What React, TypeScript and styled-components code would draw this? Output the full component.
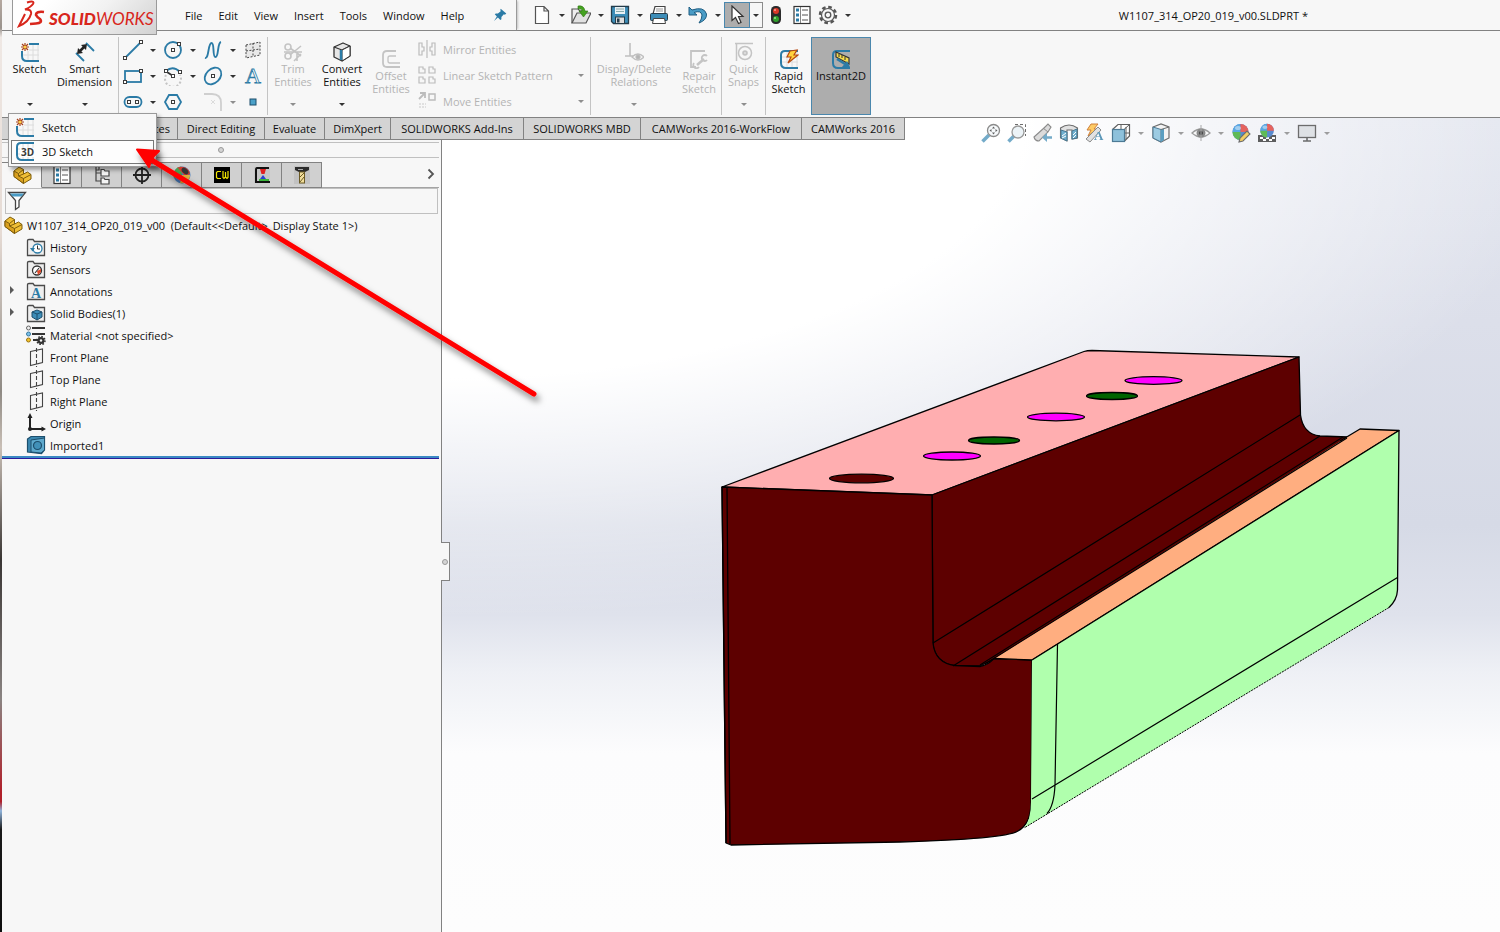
import React from 'react';
import styled, { createGlobalStyle, css } from 'styled-components';

const GlobalStyle = createGlobalStyle`
  *, *::before, *::after { box-sizing: border-box; }
  body { margin: 0; background: #f7f7f7; }
  body, button, input { font-family: 'Open Sans', 'Noto Sans', sans-serif; font-size: 11px; line-height: 13px; color: #101010; }
  button { border: 0; padding: 0; background: none; cursor: default; }
  svg { display: block; flex: none; }
  ul { list-style: none; margin: 0; padding: 0; }
`;

const LINE = '#828282';
const BLUE = '#2b7ba6';
const DARK = '#3c3c3c';
const DIM = '#c4c4c4';

/* ---------- icons ---------- */

const handle = (x: number, y: number, c = DARK) => (
  <rect x={x - 1.5} y={y - 1.5} width="3" height="3" fill="#fff" stroke={c} strokeWidth="1" />
);

const blueFrame = <path d="M19 2H6Q2 2 2 6V14Q2 19 7 19H19" fill="none" stroke={BLUE} strokeWidth="2" />;
const faintGrid = <path d="M8 3V18M13 3V18M18 3V18M3 8H19M3 13H19" stroke="#dcdcdc" fill="none" />;
const spark = (
  <g>
    <path d="M5 1V9M1 5H9M2 2L8 8M8 2L2 8" stroke="#a5401c" strokeWidth="1.2" />
    <circle cx="5" cy="5" r="1.6" fill="#ffd24a" />
  </g>
);
const folder = (
  <path d="M1.500 18.500V3.500Q1.500 2.500 3 2.500H7L8.500 4.500H18.500V18.500Z" fill="#eeeeee" stroke="#4a4a4a" strokeWidth="1.3" />
);
const plane = (
  <g fill="none" stroke="#444" strokeWidth="1.1">
    <path d="M4.500 4.500L16.500 2V15.500L4.500 18.500Z" />
    <path d="M10.500 1V20" strokeDasharray="4 2" />
  </g>
);
const partBlock = (
  <g stroke="#7e5d0c" strokeWidth="1" strokeLinejoin="round">
    <path d="M2 6V11.500L11.500 18.500L19 14V9.500L15.500 7L11.500 9V4.500L7 2Z" fill="#f0bf36" />
    <path d="M2 6L6.500 8.500V11L11.500 13.500V18.500L2 11.500Z" fill="#d9a01f" />
    <path d="M6.500 8.500L11.500 4.500M11.500 13.500L19 9.500M6.500 11L11.500 9" fill="none" />
  </g>
);
const ball = (
  <g>
    <circle cx="9.500" cy="9" r="8" fill="#3f78c8" />
    <path d="M9.500 9L9 1A8 8 0 0 0 1.500 9Z" fill="#3f9be0" />
    <path d="M9.500 9V1A8 8 0 0 1 17.500 9Z" fill="#e34a44" />
    <path d="M9.500 9H1.500A8 8 0 0 0 9.500 17Z" fill="#46b03c" />
    <ellipse cx="7" cy="5" rx="3" ry="2" fill="#fff" opacity=".45" />
  </g>
);

const ICONS: Record<string, React.ReactNode> = {
  sketch: <>{faintGrid}{blueFrame}<rect x="0" y="0" width="9" height="9" fill="#f7f7f7" />{spark}</>,
  sketch3d: (
    <>
      {faintGrid}{blueFrame}
      <rect x="5" y="7" width="14" height="9" fill="#fff" />
      <text x="6" y="15" fontSize="10" fontWeight="700" fill="#3c3c3c">3D</text>
    </>
  ),
  dimension: (
    <g fill="none">
      <path d="M1 11L9 19M11 1L19 9" stroke={BLUE} strokeWidth="1.800" />
      <path d="M5 9L9 5" stroke="#222" strokeWidth="2.500" />
      <path d="M2 12L3 6L8 11ZM12 2L6 3L11 8Z" fill="#222" />
    </g>
  ),
  line: <><path d="M2 18L18 2" stroke={BLUE} strokeWidth="1.800" />{handle(2, 18)}{handle(18, 2)}</>,
  circle: <><circle cx="10" cy="10" r="8" fill="none" stroke={BLUE} strokeWidth="1.800" />{handle(10, 10)}{handle(16, 4)}</>,
  spline: <path d="M2 18C6 19 5 3 8.500 3C12 3 9 17 12.500 17C16 17 14 3 18 2" fill="none" stroke={BLUE} strokeWidth="1.900" />,
  planeGrid: (
    <g fill="#e8e8e8" stroke="#444" strokeDasharray="2 1.500">
      <path d="M3 5L17 2V15L3 18Z" /><path d="M10 3V17M3 11L17 9" />
    </g>
  ),
  rect: <><rect x="2" y="5" width="16" height="11" fill="none" stroke={BLUE} strokeWidth="1.800" />{handle(18, 5)}{handle(2, 16)}</>,
  arc: (
    <>
      <path d="M3 5Q10 -1 17 6" fill="none" stroke={BLUE} strokeWidth="1.800" />
      <path d="M3 9A8 8 0 1 0 17 9" fill="none" stroke="#c4c4c4" strokeWidth="2" strokeDasharray="2 2" />
      <path d="M4 6L10 10" stroke="#333" strokeWidth="1.800" />{handle(3, 5)}{handle(17, 6)}{handle(10, 10)}
    </>
  ),
  ellipse: <><ellipse cx="10" cy="10" rx="9.500" ry="7" transform="rotate(-45 10 10)" fill="none" stroke={BLUE} strokeWidth="1.800" />{handle(10, 10)}</>,
  letter: <text x="2" y="17" fontFamily="Liberation Serif, serif" fontSize="22" fill="#fff" stroke={BLUE} strokeWidth="0.800">A</text>,
  slot: <><rect x="1.500" y="5" width="17" height="10" rx="5" fill="none" stroke={BLUE} strokeWidth="1.800" />{handle(6, 10)}{handle(14, 10)}</>,
  polygon: <><path d="M6 3H14L18 10L14 17H6L2 10Z" fill="none" stroke={BLUE} strokeWidth="1.800" />{handle(10, 10)}</>,
  fillet: <g fill="none" stroke="#cfcfcf"><path d="M1 2H9Q18 2 18 11V19" strokeWidth="1.800" /><path d="M8 8L12 12M12 8L8 12" strokeWidth="0.700" /></g>,
  point: <rect x="7" y="7" width="6" height="6" fill="#4aa0c8" stroke="#1d4f6d" />,
  trim: (
    <g fill="none" stroke={DIM} strokeWidth="1.600">
      <circle cx="5" cy="5" r="3" /><circle cx="5" cy="14" r="3" /><path d="M7 6L18 14M7 13L18 4M1 10H19" /><path d="M14 12V19M18 12L11 19" />
    </g>
  ),
  convert: (
    <g stroke="#333" strokeLinejoin="round">
      <path d="M2 5L11 1L18 4V14L10 19L2 15Z" fill="#e6e6e6" strokeWidth="1.300" />
      <path d="M2 5L10 8L18 4" fill="none" strokeWidth="1.200" /><path d="M10 8L18 4V14L10 19Z" fill="#fff" /><path d="M9 8V18" stroke={BLUE} strokeWidth="2.500" />
    </g>
  ),
  offset: <g fill="none" stroke={DIM} strokeWidth="1.800"><path d="M15 2H6Q2 2 2 6V14Q2 18 6 18H19" /><path d="M15 7H9Q7 7 7 9V12Q7 14 9 14H19" strokeWidth="1.300" /></g>,
  mirror: <g fill="none" stroke="#bcbcbc" strokeWidth="1.200"><path d="M10 1V19M2 4H5V8H7V12H5V16H2ZM18 4H15V8H13V12H15V16H18Z" /></g>,
  pattern: <g fill="none" stroke="#bcbcbc" strokeWidth="1.200"><path d="M2 2H6V4H8V8H2ZM12 2H16V4H18V8H12ZM2 12H6V14H8V18H2ZM12 12H16V14H18V18H12Z" /></g>,
  move: (
    <g fill="none" stroke="#bcbcbc" strokeWidth="1.800">
      <path d="M2 8L8 2M3 2H8V7" /><rect x="12" y="3" width="6" height="6" strokeWidth="1.500" /><path d="M2 13H9M2 16H9" stroke="#e0e0e0" strokeDasharray="2 1" />
    </g>
  ),
  relations: (
    <g fill="none" stroke="#c0c0c0">
      <path d="M6 1V14M1 14H11" strokeWidth="1.600" /><path d="M8 15Q14 9 20 15Q14 21 8 15Z" fill="#f7f7f7" strokeWidth="1.300" /><circle cx="14" cy="15" r="2.200" fill="#b5b5b5" />
    </g>
  ),
  repair: (
    <g fill="none" stroke={DIM}>
      <path d="M16 2H2V18H7" strokeWidth="1.800" /><path d="M8 16L15 10" strokeWidth="2.500" /><path d="M18 7A3 3 0 1 0 18 11M5 14A3 3 0 1 0 10 18" strokeWidth="1.800" />
    </g>
  ),
  snaps: <g fill="none" stroke={DIM} strokeWidth="1.500"><path d="M1 1.500H19M2.500 1V19" /><circle cx="11" cy="11" r="6.500" /><circle cx="11" cy="11" r="1.800" strokeWidth="2" /></g>,
  rapid: <>{faintGrid}{blueFrame}<path d="M11 2L18 1L15 6H19L9 14L12 8H8Z" fill="#ffd23c" stroke="#b5460f" strokeWidth="1.200" /></>,
  instant: (
    <>
      {blueFrame}
      <path d="M5 3L18 9V15L5 8Z" fill="#f5dc4c" stroke="#333" strokeWidth="1.200" /><path d="M8 5V8M11 6V9M14 8V11" stroke="#333" />
      <path d="M6 10L14 15" stroke={BLUE} strokeWidth="2.500" /><path d="M11 18L19 18L16 12Z" fill={BLUE} />
    </>
  ),
  file: <path d="M3.500 1.500H12L16.500 6V18.500H3.500ZM12 1.500V6H16.500" fill="#fff" stroke="#555" strokeWidth="1.200" />,
  open: (
    <>
      <path d="M1 18V4H7L9 6H13V9" fill="#eee" stroke="#555" strokeWidth="1.200" /><path d="M1 18L6 8H20L15 18Z" fill="#e2e2e2" stroke="#555" strokeWidth="1.200" />
      <path d="M7 1Q13 0 14 6H17L12.500 12L8 6H11Q11 3 7 4Z" fill="#45a321" stroke="#2d7412" strokeWidth=".6" />
    </>
  ),
  save: (
    <>
      <path d="M1.500 1.500H18.500V18.500H3.500L1.500 16.500Z" fill="#3c8db8" stroke="#253c4a" strokeWidth="1.300" /><rect x="5" y="2" width="10" height="7" fill="#e9f1f5" />
      <path d="M6 4H14M6 6.500H14" stroke="#8aa" /><rect x="5.500" y="12" width="9" height="6.500" fill="#ddd" stroke="#253c4a" /><rect x="7" y="13.500" width="2.500" height="4" fill="#253c4a" />
    </>
  ),
  print: (
    <>
      <path d="M4 9L6 1.500H16V9" fill="#fff" stroke="#444" strokeWidth="1.200" /><rect x="1.500" y="8.500" width="17" height="7" rx="1" fill="#3c8db8" stroke="#253c4a" />
      <path d="M4.500 13.500H15.500L16.500 18.500H3.500Z" fill="#fff" stroke="#444" /><path d="M7 4H14M7 6H14" stroke="#999" />
    </>
  ),
  undo: <path d="M1 2V10H9L6 7.500Q13 5 14 10Q14 14 11 18Q19 15 18.500 9Q16 1 4 5Z" fill="#4a9cc6" stroke="#1f5d81" strokeWidth="1" />,
  cursor: <path d="M5 1L5 15.500L8.500 12.500L11.500 18.500L14 17.500L11.500 11.500H16Z" fill="#fff" stroke="#333" strokeWidth="1.200" />,
  light: (
    <>
      <rect x="5" y="1" width="10" height="18" rx="4.500" fill="#2b2b2b" /><circle cx="10" cy="6" r="3" fill="#d93828" /><circle cx="10" cy="14" r="3" fill="#2fa02b" />
      <circle cx="9" cy="5" r="1" fill="#f7a398" /><circle cx="9" cy="13" r="1" fill="#a0e69a" />
    </>
  ),
  list: (
    <>
      <rect x="2" y="1.500" width="16" height="17" fill="#fff" stroke="#333" strokeWidth="1.200" /><path d="M8.500 2V18" stroke="#666" strokeWidth=".8" />
      <path d="M4 5H7M4 10H7M4 15H7" stroke={BLUE} strokeWidth="3" /><path d="M10 5H16M10 10H16M10 15H16" stroke="#555" />
    </>
  ),
  gear: (
    <g fill="none" stroke="#555">
      <circle cx="10" cy="10" r="8" strokeWidth="2.500" strokeDasharray="3.600 2.680" /><circle cx="10" cy="10" r="6.500" fill="#f7f7f7" strokeWidth="1.200" /><circle cx="10" cy="10" r="2.800" strokeWidth="1.300" />
    </g>
  ),
  pin: <path d="M11 1L19 8L17 9.500L15.500 9L12 13L12 16L10.500 17L7 13.500L1.500 18.500L5.500 12L2.500 9L4 8H7L11 4.500L10.500 2.500Z" fill={BLUE} />,
  tree: (
    <g fill="#f4f4f4" stroke="#444" strokeWidth="1.200">
      <path d="M4 1V16H9M4 8H9M1 1.500H7V5H4" fill="none" /><path d="M9 4.500H12L13 6H17V11H9ZM9 13H12L13 14.500H17V19H9Z" />
    </g>
  ),
  target: <g fill="none" stroke="#222" strokeWidth="1.800"><circle cx="10" cy="10" r="6.500" /><path d="M10 1V19M1 10H19" /></g>,
  ball: (
    <>
      <circle cx="10" cy="10" r="8.500" fill="#4a7fc0" /><path d="M10 10L2 13A8.500 8.500 0 0 1 9 1.500Z" fill="#4aa650" /><path d="M5 2L13 11L18 9A8.500 8.500 0 0 0 5 3Z" fill="#d13a2e" />
      <path d="M10 10L18 10A8 8 0 0 1 8 18Z" fill="#e3b23c" /><ellipse cx="13" cy="6" rx="4" ry="2.500" transform="rotate(45 13 6)" fill="#333" />
    </>
  ),
  camworks: (
    <>
      <rect x="2" y="2" width="16" height="16" fill="#000" /><path d="M9 6.500H5.500L4.500 7.500V12.500L5.500 13.500H9M11 6V12.500L12 13.500L13.500 12V7M13.500 12L15 13.500L16 12.500V6" fill="none" stroke="#f2e600" strokeWidth="1.200" />
    </>
  ),
  machine: (
    <>
      <rect x="2" y="2" width="16" height="16" fill="#c6c6c6" /><path d="M17 3H5Q4 3 4 5V17H18" fill="none" stroke="#111" strokeWidth="2" /><path d="M8 4H14L12.500 9H9.500Z" fill="#e02020" />
      <path d="M11 10L14 14H8Z" fill="#2a3fd0" /><rect x="7" y="14" width="10" height="2" fill="#3bb53b" />
    </>
  ),
  endmill: (
    <>
      <rect x="2" y="1" width="16" height="18" fill="#c2c2c2" /><path d="M3 2H17V5L13 7H7L3 5Z" fill="#2b2b2b" /><path d="M6 4.500H11" stroke="#aaa" /><rect x="7.500" y="7" width="5" height="11" fill="#f1dd9a" stroke="#6b5a25" /><path d="M8 12L12 8M8 17L12 12" stroke="#6b5a25" />
    </>
  ),
  funnel: <><path d="M1.500 1.500H18.500L12 9.500V16L8.500 18.500V9.500Z" fill="#fff" stroke="#444" strokeWidth="1.300" /><path d="M3 2.500H17L14.500 5.500H5.500Z" fill="#4a9cc6" /></>,
  part: partBlock,
  history: <>{folder}<circle cx="11.500" cy="11.500" r="4.500" fill="#fff" stroke={BLUE} strokeWidth="1.300" /><path d="M11.500 8.500V12H14" fill="none" stroke="#333" /><path d="M4 11H9L6.500 14.500Z" fill={BLUE} /></>,
  sensors: <>{folder}<circle cx="11" cy="11.500" r="4.500" fill="#fff" stroke="#333" strokeWidth="1.300" /><path d="M11 12L15 10V13L12 16Z" fill="#e04a2b" /><path d="M9 14L13 9" stroke="#333" strokeWidth="1.200" /></>,
  annotations: <>{folder}<text x="5" y="17" fontFamily="Liberation Serif, serif" fontSize="14" fontWeight="700" fill={BLUE}>A</text></>,
  bodies: <>{folder}<path d="M6 9L11 7L16 9V14L11 17L6 14Z" fill="#3c8db8" stroke="#1d4f6d" /><path d="M6 9L11 11V17M11 11L16 9" fill="none" stroke="#1d4f6d" /></>,
  material: (
    <>
      <path d="M6 3H19M6 9H19M7 15H12" stroke="#333" strokeWidth="1.800" /><circle cx="2.500" cy="3" r="2" fill="#eee" stroke="#666" /><circle cx="2.500" cy="9" r="2" fill="#7cc0ea" stroke="#3579a0" />
      <circle cx="2.500" cy="15" r="2" fill="#f4c22c" stroke="#9a7410" /><circle cx="15" cy="15.500" r="3.500" fill="#333" /><circle cx="15" cy="15.500" r="4" fill="none" stroke="#333" strokeWidth="1.500" strokeDasharray="1.600 1.500" /><circle cx="15" cy="15.500" r="1.200" fill="#f7f7f7" />
    </>
  ),
  plane,
  origin: <g fill="#222"><path d="M4 4V16H16" fill="none" stroke="#222" strokeWidth="2" /><path d="M4 0L6.500 5H1.500ZM20 16L15.500 18.500V13.500Z" /><circle cx="4" cy="16" r="2" /></g>,
  imported: (
    <>
      <path d="M1.500 4L5 1.500H18.500V15L15.500 18.500L1.500 17Z" fill="#3c88b0" stroke="#1d4f6d" strokeWidth="1.200" /><path d="M5 5L18.500 3V15L15 18L5 17Z" fill="#5ea9cd" stroke="#1d4f6d" /><circle cx="11.500" cy="10.500" r="4" fill="#4190b8" stroke="#1d4f6d" strokeWidth="1.200" />
    </>
  ),
  zoomFit: <><path d="M1.500 18.500L8 12" stroke="#5c9dc0" strokeWidth="3.500" /><circle cx="12.500" cy="7.500" r="6" fill="#f5f9fb" stroke="#777" strokeWidth="1.300" /><path d="M12.500 3.500L14 5.500H11ZM12.500 11.500L14 9.500H11ZM8.500 7.500L10.500 6V9ZM16.500 7.500L14.500 6V9Z" fill="#444" /></>,
  zoomArea: <><path d="M8 1.500H18.500V13" fill="none" stroke="#555" strokeDasharray="3 2" /><path d="M1.500 18.500L7 13" stroke="#5c9dc0" strokeWidth="3.500" /><circle cx="11" cy="9" r="6" fill="#e9f2f6" stroke="#888" strokeWidth="1.300" /></>,
  prevView: <><path d="M1 14L11 5L15 1L18 4L15 9L6 18Q2 18 1 14Z" fill="#d5d5d5" stroke="#777" strokeWidth="1.100" /><path d="M10 5L15 9" stroke="#777" /><path d="M19 14.500H13" stroke="#5c9dc0" strokeWidth="2.500" /><path d="M9 14.500L14 10V19Z" fill="#5c9dc0" /></>,
  section: <><path d="M1.500 5Q10 -1 18.500 5V15L13 16V7H8V18L1.500 15Z" fill="#ddd" stroke="#555" strokeWidth="1.100" /><path d="M2 7L8 9V18L2 15ZM13 8L18 6V15L13 16Z" fill="#58a3c8" stroke="#27607f" /><path d="M3 13L7 10M3 15L7 13M14 12L17 9M14 15L17 12" stroke="#fff" /></>,
  dynView: <><path d="M6 1H13L9 6H12L3 13L6 7H2Z" fill="#ffc34a" stroke="#c66a1a" /><path d="M1 16L13 4L16 7L5 19Z" fill="#ddd" stroke="#777" /><text x="9" y="17" fontFamily="Liberation Serif, serif" fontSize="13" fontWeight="700" fill="#3f86ad">A</text></>,
  cube: <><path d="M1.500 6.500L7 1.500H18.500V13L13 18.500" fill="#fff" stroke="#444" strokeWidth="1.200" /><path d="M13 6.500L18.500 1.500M10 2V6M13 10H18M15 4V16" stroke="#444" /><rect x="1.500" y="6.500" width="12" height="12" fill="#7cb8d6" stroke="#2f6484" strokeWidth="1.200" /></>,
  shaded: <><path d="M2 4L10 1L18 4V15L10 19L2 15Z" fill="#f3f3f3" stroke="#555" strokeWidth="1.200" /><path d="M2 4L10 6.500V19L2 15Z" fill="#8cc4de" stroke="#2f6484" /><path d="M10 6.500L13 5.500V17L10 19Z" fill="#3f8fb8" /><path d="M10 6.500L18 4" stroke="#555" /></>,
  eye: <><path d="M1 10Q10 2 19 10Q10 18 1 10Z" fill="#fafafa" stroke="#8c8c8c" strokeWidth="1.300" /><circle cx="10" cy="10" r="4.500" fill="#777" /><circle cx="10" cy="10" r="2" fill="#222" /><path d="M10 2V18" stroke="#999" /></>,
  appearance: <>{ball}<path d="M8 19L9 15L16 8L19 11L12 18Z" fill="#f3c84a" stroke="#555" strokeWidth="1.100" /></>,
  scene: <><rect x="1" y="12" width="18" height="7" fill="#444" /><path d="M3 14H6V16H3ZM9 14H12V16H9ZM15 14H18V16H15ZM6 16H9V18H6ZM12 16H15V18H12Z" fill="#fff" /><g transform="translate(2 0) scale(.85)">{ball}</g></>,
  monitor: <><rect x="1.500" y="2.500" width="17" height="12" fill="#dcdfe3" stroke="#555" strokeWidth="1.300" /><path d="M10 15V18M6 18H14" stroke="#555" strokeWidth="1.600" /></>,
};

const Icon = ({ name, size = 20 }: { name: string; size?: number }) => (
  <svg width={size} height={size} viewBox="0 0 20 20" aria-hidden="true">{ICONS[name]}</svg>
);

const Caret = styled.span<{ $dim?: boolean }>`
  display: block;
  border: 3px solid transparent;
  border-top-color: ${(p) => (p.$dim ? '#8e8e8e' : '#333')};
  border-bottom-width: 0;
`;

/* ---------- frame ---------- */

const Screen = styled.div`
  position: relative;
  display: flex;
  min-height: 100vh;
`;

const DesktopEdge = styled.div`
  flex: none;
  width: 2px;
  background: linear-gradient(#b5a8a0 0, #9a938d 3%, #efe8e4 4%, #e6dbd4 25%, #8f8a84 42%, #c9bfb6 48%, #3a3634 60%, #8a8482 75%, #b0202a 85%, #b0202a 86%, #8fb4dc 87%, #1a1a1a 89%, #0e0e0e 100%);
`;

const Window = styled.div`
  display: flex;
  flex: 1;
  flex-direction: column;
  min-width: 0;
`;

/* ---------- title bar ---------- */

const TitleBar = styled.header`
  display: flex;
  height: 31px;
  border-bottom: 1px solid ${LINE};
`;

const Brand = styled.a`
  position: relative;
  z-index: 2;
  display: flex;
  width: 145px;
  height: 35px;
  margin-left: 10px;
  padding-left: 4px;
  border: 1px solid #9a9a9a;
  border-top: 0;
  background: linear-gradient(135deg, #ffffff 20%, #f2f2f2 55%, #d2d2d2);
  color: #d8261c;
  font-family: Lato, sans-serif;
  font-size: 17px;
  font-style: italic;
  font-weight: 400;
  line-height: 38px;
  text-decoration: none;
  b { font-weight: 900; }
  span { margin-left: 4px; }
`;

const MenuBar = styled.nav`
  display: flex;
  flex: none;
  align-items: center;
  gap: 16px;
  width: 360px;
  padding-left: 28px;
  border-right: 1px solid #9a9a9a;
  box-shadow: 2px 0 2px -1px #c4c4c4;
  svg { margin: 0 9px 0 auto; }
`;

const QuickBar = styled.div`
  display: flex;
  align-items: center;
  margin-left: 12px;
`;

const IconButton = styled.button<{ $on?: boolean }>`
  display: flex;
  align-items: center;
  justify-content: center;
  width: 26px;
  height: 26px;
  ${(p) => p.$on && css`
    background: #adadad;
    border: 1px solid #4a87ad;
  `}
`;

const CaretButton = styled.button<{ $boxed?: boolean }>`
  display: flex;
  align-items: center;
  justify-content: center;
  width: 13px;
  height: 26px;
  ${(p) => p.$boxed && css`
    border: 1px solid #8c8c8c;
    border-left: 0;
  `}
`;

const DocTitle = styled.div`
  align-self: center;
  margin: 0 192px 0 auto;
  white-space: pre;
`;

/* ---------- ribbon ---------- */

const Ribbon = styled.div`
  display: flex;
  height: 87px;
  padding: 6px 0 2px;
  border-bottom: 1px solid ${LINE};
`;

const RibbonGroup = styled.div<{ $end?: number }>`
  display: flex;
  height: 78px;
  padding-right: ${(p) => p.$end ?? 0}px;
  border-right: 1px solid #c4c4c4;
  &:last-child { border: 0; }
`;

const BigButton = styled.button<{ $w: number; $dim?: boolean; $low?: boolean; $on?: boolean }>`
  display: flex;
  flex: none;
  flex-direction: column;
  align-items: center;
  width: ${(p) => p.$w}px;
  padding: ${(p) => (p.$low ? 12 : 5)}px 0 9px;
  color: ${(p) => (p.$dim ? '#b4b4b4' : 'inherit')};
  white-space: pre;
  ${(p) => p.$on && css`
    background: #adadad;
    box-shadow: inset 0 0 0 1px #4a87ad;
  `}
  & > ${Caret} { margin-top: auto; }
`;

const ToolGrid = styled.div`
  display: grid;
  grid-template-columns: 40px 40px 40px 27px;
  grid-auto-rows: 26px;
  padding-left: 1px;
`;

const SplitTool = styled.div`
  display: flex;
`;

const StackList = styled.div`
  display: flex;
  flex-direction: column;
  width: 174px;
`;

const StackButton = styled.button`
  display: flex;
  align-items: center;
  height: 26px;
  padding: 0 6px 2px 1px;
  gap: 6px;
  color: #b4b4b4;
  & > ${Caret} { margin-left: auto; }
`;

/* ---------- command tabs ---------- */

const Workspace = styled.main`
  position: relative;
  display: flex;
  flex: 1;
  flex-direction: column;
  background:
    radial-gradient(ellipse 1120px 500px at 440px 0, #fff 0, #fff 52%, rgba(255, 255, 255, 0) 100%),
    linear-gradient(#e3e6ef 0, #dcdfea 25%, #d6dae6 50%, #dfe2ec 61%, #eef0f5 68%, #fcfcfd 78%, #fdfdfd 100%);
`;

const CommandTabs = styled.div`
  display: flex;
  height: 22px;
`;

const CommandTab = styled.button<{ $w: number }>`
  width: ${(p) => p.$w}px;
  padding: 0 7px;
  border: solid ${LINE};
  border-width: 0 1px 1px 0;
  background: #d4d4d4;
  text-align: center;
  white-space: nowrap;
  &:first-child { text-align: right; }
`;

const ViewToolbar = styled.div`
  position: absolute;
  top: 2px;
  right: 166px;
  display: flex;
  opacity: 0.85;
  ${CaretButton} { width: 14px; }
`;

/* ---------- feature panel ---------- */

const Body = styled.div`
  display: flex;
  flex: 1;
`;

const Panel = styled.aside`
  flex: none;
  width: 440px;
  border-right: 1px solid ${LINE};
  background: #f7f7f7;
`;

const Grip = styled.div`
  display: flex;
  align-items: center;
  justify-content: center;
  height: 16px;
  margin: 2px 2px 4px 0;
  border: solid #c0c0c0;
  border-width: 1px 0;
`;

const Dot = styled.span`
  width: 6px;
  height: 6px;
  border: 1px solid #999;
  border-radius: 50%;
  background: #d4d4d4;
`;

const PanelTabs = styled.div`
  display: flex;
  height: 26px;
  margin-right: 2px;
  border-bottom: 1px solid #a4a4a4;
`;

const PanelTab = styled.button<{ $active?: boolean }>`
  display: flex;
  align-items: center;
  justify-content: center;
  width: 40px;
  height: 26px;
  border: solid ${LINE};
  border-width: 1px 1px 1px 0;
  background: ${(p) => (p.$active ? '#f7f7f7' : '#d0d0d0')};
  ${(p) => p.$active && css`border-bottom-color: #f7f7f7;`}
`;

const MoreButton = styled.button`
  margin: 0 4px 2px auto;
`;

const FilterBox = styled.label`
  display: flex;
  align-items: center;
  height: 26px;
  margin: 0 3px 0 3px;
  padding-left: 1px;
  border: 1px solid #c0c0c0;
  input { flex: 1; border: 0; background: none; outline: 0; }
`;

const Tree = styled.ul`
  margin-right: 2px;
  border-bottom: 2px solid #3b8ac4;
  box-shadow: 0 1px 0 #2a1c9c;
`;

const TreeRow = styled.li<{ $root?: boolean }>`
  display: flex;
  align-items: center;
  height: 22px;
  padding-left: ${(p) => (p.$root ? 1 : 8)}px;
  white-space: pre;
  & > svg { margin-right: 4px; }
`;

const Twisty = styled.button<{ $shown?: boolean }>`
  width: 16px;
  height: 8px;
  margin-bottom: 2px;
  &::before {
    content: '';
    display: ${(p) => (p.$shown ? 'block' : 'none')};
    width: 0;
    border: 4px solid transparent;
    border-left-color: #5a5a5a;
    border-right-width: 0;
  }
`;

/* ---------- graphics area ---------- */

const Viewport = styled.section`
  position: relative;
  flex: 1;
  min-width: 0;
  & > svg { width: 100%; height: 100%; }
`;

const PanelHandle = styled.button`
  position: absolute;
  top: 402px;
  left: -1px;
  display: flex;
  align-items: center;
  justify-content: center;
  width: 9px;
  height: 39px;
  border: 1px solid ${LINE};
  border-left: 0;
  background: #f7f7f7;
`;

const SketchMenu = styled.div`
  position: absolute;
  z-index: 3;
  top: 113px;
  left: 8px;
  width: 149px;
  padding: 2px;
  border: 1px solid #9a9a9a;
  background: #f7f7f7;
  box-shadow: 3px 3px 4px rgba(0, 0, 0, 0.35);
`;

const SketchMenuItem = styled.button<{ $hot?: boolean }>`
  display: flex;
  align-items: center;
  gap: 7px;
  width: 100%;
  height: 24px;
  padding: 0 0 2px 3px;
  border: 1px solid ${(p) => (p.$hot ? '#777' : 'transparent')};
  background: ${(p) => (p.$hot ? '#fdfdfd' : 'transparent')};
`;

const Pointer = styled.svg`
  position: absolute;
  z-index: 4;
  top: 140px;
  left: 130px;
  pointer-events: none;
`;

/* ---------- data ---------- */

const MENUS = ['File', 'Edit', 'View', 'Insert', 'Tools', 'Window', 'Help'];

const QUICK: [string, string, boolean][] = [
  ['file', 'New', true], ['open', 'Open', true], ['save', 'Save', true], ['print', 'Print', true], ['undo', 'Undo', true],
  ['cursor', 'Select', true], ['light', 'Rebuild', false], ['list', 'File Properties', false], ['gear', 'Options', true],
];

const TOOLS: [string, boolean][] = [
  ['line', true], ['circle', true], ['spline', true], ['planeGrid', false],
  ['rect', true], ['arc', true], ['ellipse', true], ['letter', false],
  ['slot', true], ['polygon', false], ['fillet', true], ['point', false],
];

const TABS: [string, number][] = [
  ['Surfaces', 176], ['Direct Editing', 87], ['Evaluate', 60], ['DimXpert', 66], ['SOLIDWORKS Add-Ins', 133],
  ['SOLIDWORKS MBD', 117], ['CAMWorks 2016-WorkFlow', 161], ['CAMWorks 2016', 103],
];

const VIEW_TOOLS: [string, boolean][] = [
  ['zoomFit', false], ['zoomArea', false], ['prevView', false], ['section', false], ['dynView', false], ['cube', true],
  ['shaded', true], ['eye', true], ['appearance', false], ['scene', true], ['monitor', true],
];

const PANEL_TABS = ['part', 'list', 'tree', 'target', 'ball', 'camworks', 'machine', 'endmill'];

const NODES: [string, string, boolean][] = [
  ['history', 'History', false], ['sensors', 'Sensors', false], ['annotations', 'Annotations', true], ['bodies', 'Solid Bodies(1)', true],
  ['material', 'Material <not specified>', false], ['plane', 'Front Plane', false], ['plane', 'Top Plane', false],
  ['plane', 'Right Plane', false], ['origin', 'Origin', false], ['imported', 'Imported1', false],
];

type BigProps = { icon: string; label: string; w: number; dim?: boolean; low?: boolean; on?: boolean };
const Big = ({ icon, label, w, dim, low, on }: BigProps) => (
  <BigButton $w={w} $dim={dim} $low={low} $on={on}>
    <Icon name={icon} />
    <span>{label}</span>
    {!low && <Caret $dim={dim} />}
  </BigButton>
);

const Model = () => (
  <svg viewBox="442 140 1058 792" role="img" aria-label="Machined block" fill="none" stroke="#000" strokeWidth="1.300" strokeLinejoin="round">
    <path d="M722 487L1084 351.500Q1087 350.500 1092 350.500L1299 357L932 495Z" fill="#ffaeb0" />
    <path d="M932 495L1299 357L1300.500 415Q1303 434 1320 436L1348 437L996 658L980 666H955Q934 662 933 643Z" fill="#5d0000" />
    <path d="M722 487L932 495L933 643Q935 663 955 665.500L980 666.500Q988 665 994 658.500L1032 660L1031 802Q1031 824 1018 831Q1005 839 900 842L731 845L726 843Z" fill="#5d0000" />
    <path d="M994 658.500L1360 429L1399 430.500L1032 660Z" fill="#ffae80" stroke="none" />
    <path d="M994 658.500L1032 660L1399 430.500L1360 429L1340 441" />
    <path d="M1032 660L1399 430.500L1397.500 590Q1397 600 1389 607.500L1024 828Q1031 820 1031 802Z" fill="#b0ffad" stroke="none" />
    <path d="M1032 660L1399 430.500L1397.500 590Q1397 600 1389 607.500" />
    <path d="M1389 607.500L1024 828" strokeWidth="1" strokeDasharray="2 1" />
    <path d="M1032 799L1397.500 577.500M1057.500 644L1055 785Q1054 806 1047 813.500" strokeWidth="1.200" />
    <path d="M727 488L730 844M722 487L726 843" />
    <path d="M933 643L1300 415M953 666L1320 436M980 665L1343 437M985 664L1347 438" strokeWidth="1.200" />
    <ellipse cx="861.500" cy="478.500" rx="32" ry="4.300" fill="#5d0000" />
    <ellipse cx="952" cy="456" rx="28.500" ry="4" fill="#f0f" />
    <ellipse cx="994" cy="440.500" rx="25.500" ry="3.500" fill="#006400" />
    <ellipse cx="1056" cy="417" rx="28.500" ry="3.800" fill="#f0f" />
    <ellipse cx="1112" cy="396" rx="25.500" ry="3.500" fill="#006400" />
    <ellipse cx="1153.500" cy="380.500" rx="28.500" ry="3.800" fill="#f0f" />
  </svg>
);

export default function App() {
  return (
    <Screen>
      <GlobalStyle />
      <DesktopEdge />
      <Window>
        <TitleBar>
          <Brand href="#">
            <svg width="28" height="30" viewBox="0 0 28 30" fill="none" stroke="#d8261c" strokeWidth="2" aria-hidden="true">
              <path d="M10 2.500Q18 0 16 4Q14 7 8 9.500Q15 9 14 14Q12 22 2 26L8 14" />
              <path d="M27 12Q19 11 19 15Q20 17 23 19Q26 23 19 23.500L13 24" strokeWidth="2.600" />
            </svg>
            <span><b>SOLID</b>WORKS</span>
          </Brand>
          <MenuBar>
            {MENUS.map((m) => <button key={m}>{m}</button>)}
            <Icon name="pin" size={14} />
          </MenuBar>
          <QuickBar>
            {QUICK.map(([icon, label, caret]) => (
              <React.Fragment key={icon}>
                <IconButton aria-label={label} $on={icon === 'cursor'}><Icon name={icon} /></IconButton>
                {caret && <CaretButton aria-label={`${label} options`} $boxed={icon === 'cursor'}><Caret /></CaretButton>}
              </React.Fragment>
            ))}
          </QuickBar>
          <DocTitle>W1107_314_OP20_019_v00.SLDPRT *</DocTitle>
        </TitleBar>

        <Ribbon>
          <RibbonGroup $end={6}>
            <Big icon="sketch" label="Sketch" w={55} />
            <Big icon="dimension" label={'Smart\nDimension'} w={55} />
          </RibbonGroup>
          <RibbonGroup>
            <ToolGrid>
              {TOOLS.map(([icon, caret]) => (
                <SplitTool key={icon}>
                  <IconButton aria-label={icon}><Icon name={icon} /></IconButton>
                  {caret && <CaretButton aria-label={`${icon} options`}><Caret $dim={icon === 'fillet'} /></CaretButton>}
                </SplitTool>
              ))}
            </ToolGrid>
          </RibbonGroup>
          <RibbonGroup>
            <Big icon="trim" label={'Trim\nEntities'} w={50} dim />
            <Big icon="convert" label={'Convert\nEntities'} w={48} />
            <Big icon="offset" label={'Offset\nEntities'} w={50} dim low />
            <StackList>
              <StackButton><Icon name="mirror" />Mirror Entities</StackButton>
              <StackButton><Icon name="pattern" />Linear Sketch Pattern<Caret $dim /></StackButton>
              <StackButton><Icon name="move" />Move Entities<Caret $dim /></StackButton>
            </StackList>
          </RibbonGroup>
          <RibbonGroup>
            <Big icon="relations" label={'Display/Delete\nRelations'} w={86} dim />
            <Big icon="repair" label={'Repair\nSketch'} w={44} dim low />
          </RibbonGroup>
          <RibbonGroup>
            <Big icon="snaps" label={'Quick\nSnaps'} w={43} dim />
          </RibbonGroup>
          <RibbonGroup>
            <Big icon="rapid" label={'Rapid\nSketch'} w={45} low />
            <Big icon="instant" label="Instant2D" w={60} low on />
          </RibbonGroup>
        </Ribbon>

        <Workspace>
          <CommandTabs>
            {TABS.map(([label, w]) => <CommandTab key={label} $w={w}>{label}</CommandTab>)}
          </CommandTabs>
          <ViewToolbar>
            {VIEW_TOOLS.map(([icon, caret]) => (
              <React.Fragment key={icon}>
                <IconButton aria-label={icon}><Icon name={icon} /></IconButton>
                {caret && <CaretButton aria-label={`${icon} options`}><Caret $dim /></CaretButton>}
              </React.Fragment>
            ))}
          </ViewToolbar>
          <Body>
            <Panel>
              <Grip><Dot /></Grip>
              <PanelTabs>
                {PANEL_TABS.map((icon, i) => (
                  <PanelTab key={icon} $active={i === 0} aria-label={icon}><Icon name={icon} /></PanelTab>
                ))}
                <MoreButton aria-label="More tabs">
                  <svg width="8" height="12" viewBox="0 0 8 12" fill="none" stroke="#555" strokeWidth="1.800"><path d="M1.500 1.500L6 6L1.500 10.500" /></svg>
                </MoreButton>
              </PanelTabs>
              <FilterBox>
                <Icon name="funnel" />
                <input type="text" aria-label="Filter" />
              </FilterBox>
              <Tree>
                <TreeRow $root><Icon name="part" />W1107_314_OP20_019_v00  (Default&lt;&lt;Default&gt;_Display State 1&gt;)</TreeRow>
                {NODES.map(([icon, label, open]) => (
                  <TreeRow key={label}>
                    <Twisty $shown={open} aria-label={`Expand ${label}`} />
                    <Icon name={icon} />{label}
                  </TreeRow>
                ))}
              </Tree>
            </Panel>
            <Viewport>
              <Model />
              <PanelHandle aria-label="Collapse panel"><Dot /></PanelHandle>
            </Viewport>
          </Body>
        </Workspace>
      </Window>

      <SketchMenu>
        <SketchMenuItem><Icon name="sketch" />Sketch</SketchMenuItem>
        <SketchMenuItem $hot><Icon name="sketch3d" />3D Sketch</SketchMenuItem>
      </SketchMenu>

      <Pointer width="420" height="280" viewBox="130 140 420 280" aria-hidden="true">
        <defs>
          <filter id="soft" x="-10%" y="-10%" width="120%" height="120%">
            <feDropShadow dx="3" dy="5" stdDeviation="3" floodColor="#000" floodOpacity="0.500" />
          </filter>
        </defs>
        <g filter="url(#soft)">
          <path d="M534 394L150 159" stroke="#f00" strokeWidth="5" strokeLinecap="round" />
          <path d="M137 149.500L159 151L152 158L149 167Z" fill="#f00" stroke="#f00" strokeWidth="2" strokeLinejoin="round" />
        </g>
      </Pointer>
    </Screen>
  );
}
